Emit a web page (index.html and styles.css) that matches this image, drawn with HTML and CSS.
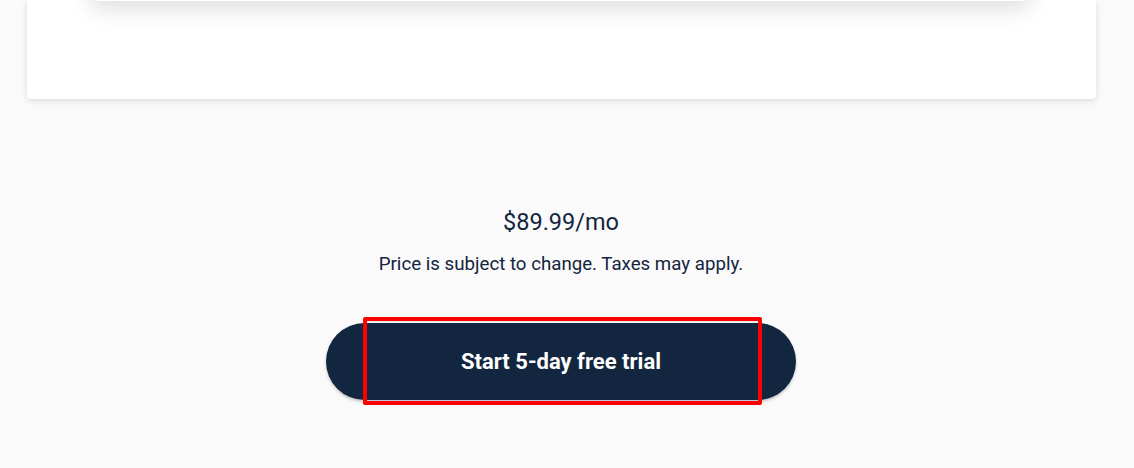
FILE: index.html
```html
<!DOCTYPE html>
<html>
<head>
<meta charset="utf-8">
<link rel="stylesheet" href="styles.css">
</head>
<body>
<div class="outer-card">
  <div class="inner-card"></div>
</div>
<div class="pricing">
  <div class="price">$89.99/mo</div>
  <div class="note">Price is subject to change. Taxes may apply.</div>
  <div class="cta-wrap">
    <button class="cta">Start 5-day free trial</button>
    <div class="highlight"></div>
  </div>
</div>
</body>
</html>
```
FILE: styles.css
```css
html, body {
  margin: 0;
  padding: 0;
  background: #fafafa;
  font-family: Roboto, "Liberation Sans", sans-serif;
  color: #13253f;
  height: 468px;
  overflow: hidden;
}
.outer-card {
  display: flow-root;
  margin: 0 38px 0 27px;
  height: 99px;
  background: #fff;
  border-radius: 0 0 4px 4px;
  box-shadow: 0 2px 6px rgba(0,0,0,0.12);
  padding: 0 65px 0 63px;
  box-sizing: border-box;
}
.inner-card {
  margin-top: -40px;
  height: 41px;
  background: #fff;
  border-radius: 0 0 10px 10px;
  box-shadow: 0 8px 22px rgba(0,0,0,0.13);
}
.pricing {
  display: flex;
  flex-direction: column;
  align-items: center;
  padding-top: 108px;
  margin-right: 12px;
}
.price {
  font-size: 23.5px;
  line-height: 30px;
}
.note {
  font-size: 18.7px;
  line-height: 24px;
  margin-top: 15px;
}
.cta-wrap {
  position: relative;
  margin-top: 47px;
}
.cta {
  display: block;
  width: 470px;
  height: 77px;
  border: none;
  border-radius: 38.5px;
  background: #12263f;
  color: #fff;
  font-family: Roboto, "Liberation Sans", sans-serif;
  font-weight: 700;
  font-size: 22px;
  box-shadow: 0 2px 3px rgba(0,0,0,0.2);
}
.highlight {
  position: absolute;
  left: 37px;
  top: -6px;
  width: 399px;
  height: 88px;
  border: 4px solid #ff0000;
  box-sizing: border-box;
  border-radius: 2px;
  box-shadow: inset 0 1px 0 #e6ebf1, inset 0 -1px 0 #c4c8ce;
}
```
